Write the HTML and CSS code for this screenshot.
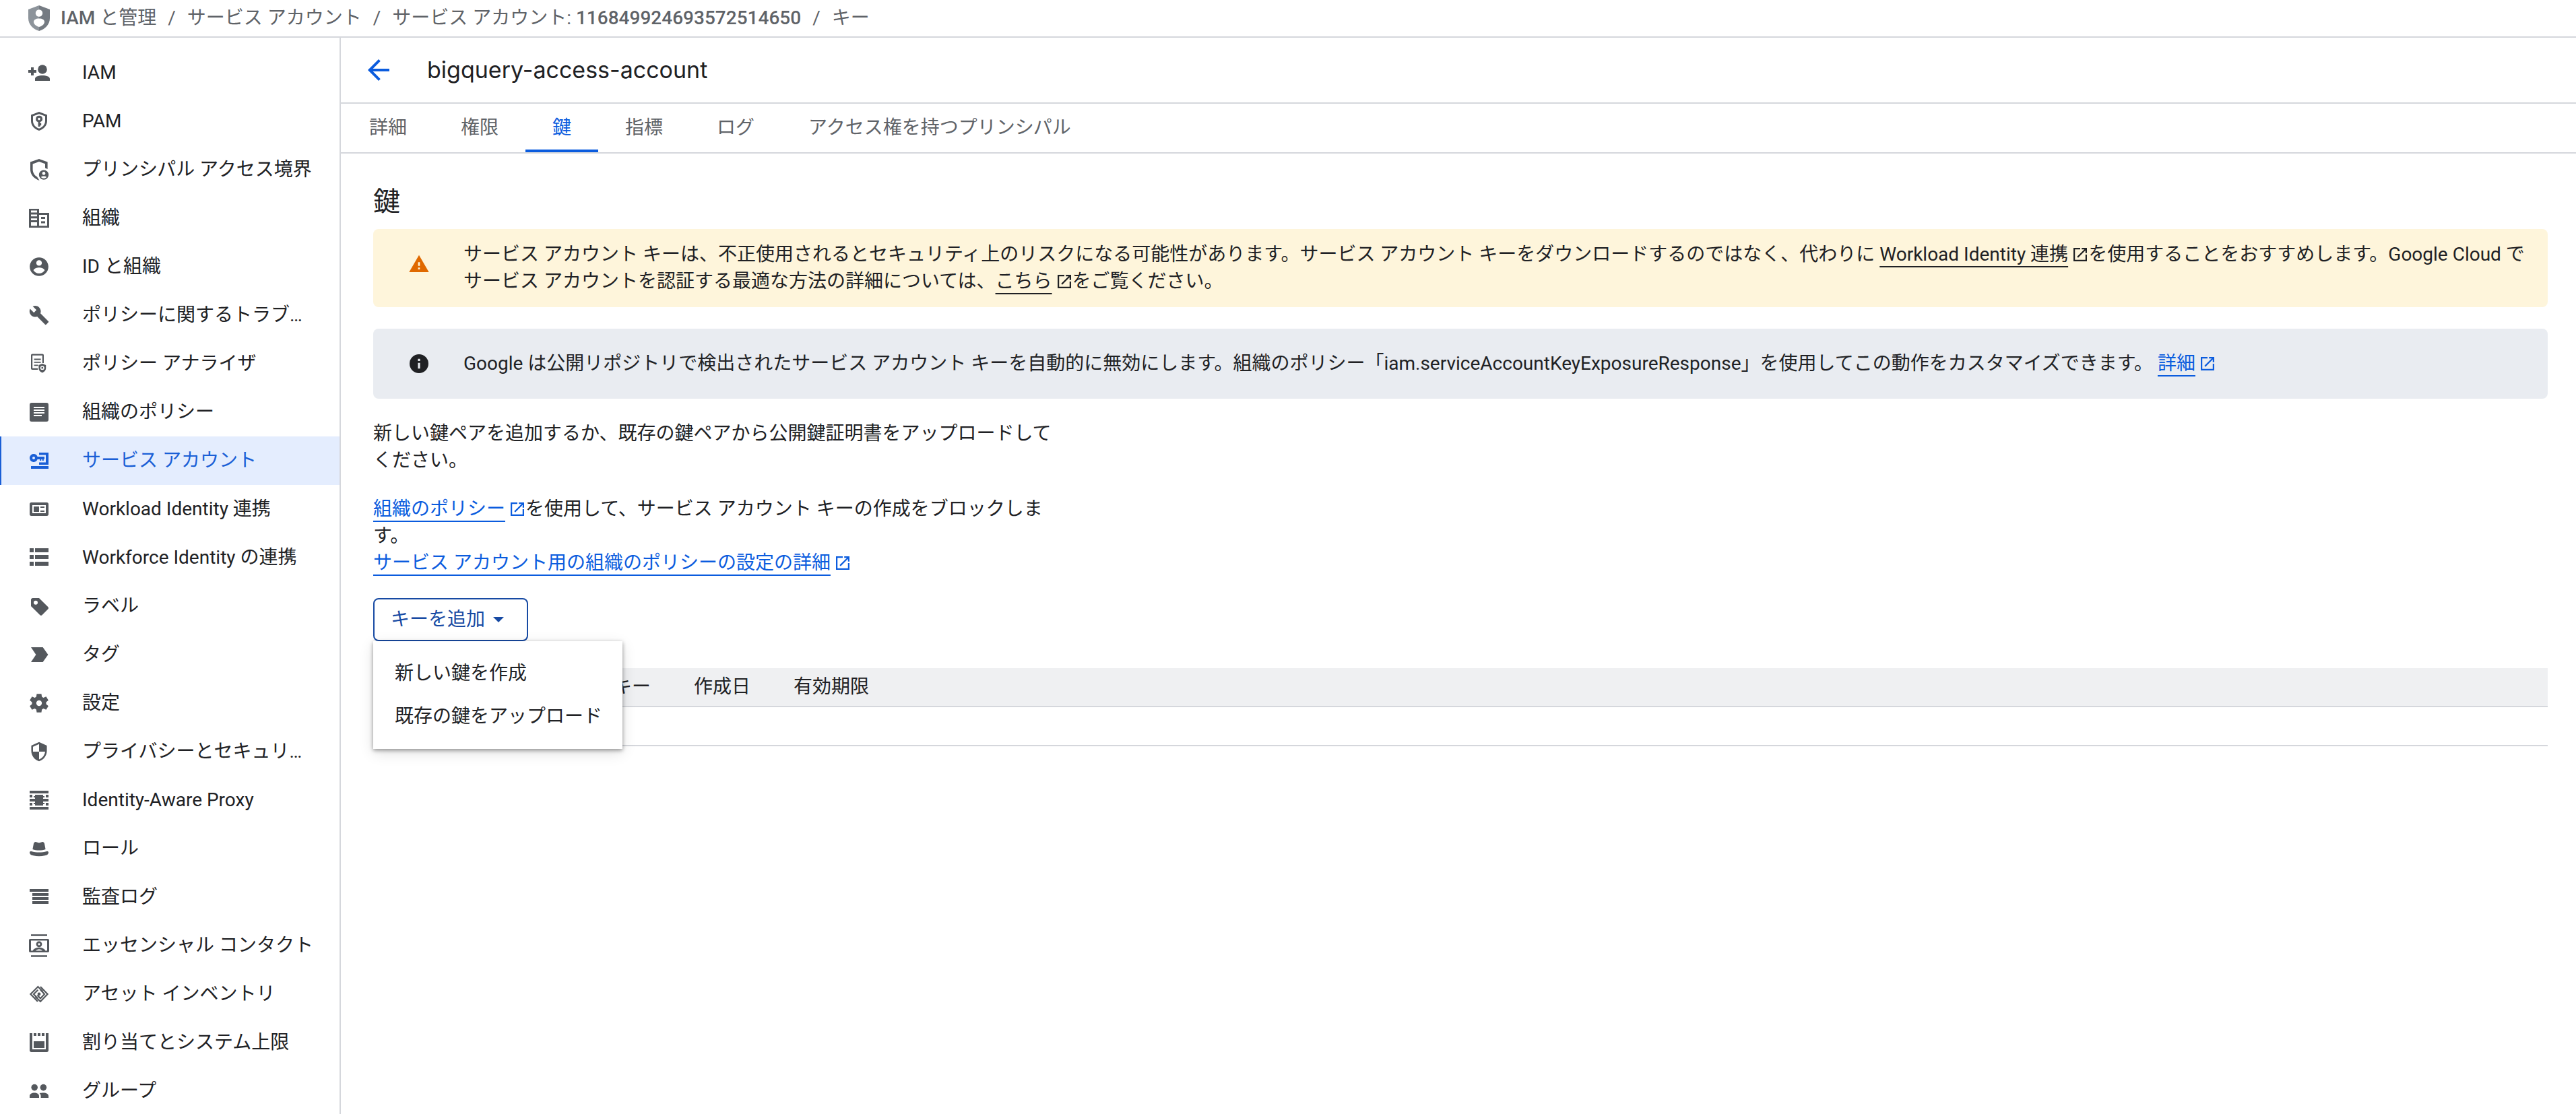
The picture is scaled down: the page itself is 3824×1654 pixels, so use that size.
FILE: index.html
```html
<!DOCTYPE html>
<html lang="ja">
<head>
  <meta charset="UTF-8">
  <meta name="viewport" content="width=device-width, initial-scale=1.0">
  <title>bigquery-access-account</title>
  <link rel="stylesheet" href="styles.css">
</head>
<body>
  <svg class="defs" aria-hidden="true">
    <symbol id="open" viewBox="3 3 18 18"><path d="M19 19H5V5h7V3H3v18h18v-9h-2v7zM14 3v2h3.600l-9.800 9.800 1.400 1.400L19 6.400V10h2V3h-7z"/></symbol>
  </svg>

  <header class="topbar">
    <svg class="logo" viewBox="0 0 32 38"><path fill="#8d949b" d="M16 0L0 6v13c0 9 7 16.500 16 19z"/><path fill="#757b82" d="M16 0l16 6v13c0 9-7 16.500-16 19z"/><circle cx="16" cy="11.500" r="5.200" fill="#fff"/><path fill="#fff" d="M16 19.500c5 0 8 2 8 5 0 3.500-4 6.500-8 7.500-4-1-8-4-8-7.500 0-3 3-5 8-5z"/></svg>
    <nav class="crumbs">
      <a href="#"><strong>IAM</strong> と管理</a><span class="sep">/</span>
      <a href="#">サービス アカウント</a><span class="sep">/</span>
      <a href="#">サービス アカウント: <strong>116849924693572514650</strong></a><span class="sep">/</span>
      <a href="#">キー</a>
    </nav>
  </header>

  <div class="layout">
    <nav class="sidebar">
      <a class="nav-item" href="#"><svg viewBox="0 0 18 18"><circle cx="11.500" cy="6.500" r="3.400"/><path d="M6 15v-1.500c0-1.800 3-2.500 5.500-2.500s5.500.7 5.500 2.500V15zM3 5h2v2h2v2H5v2H3V9H1V7h2z"/></svg><span>IAM</span></a>
      <a class="nav-item" href="#"><svg viewBox="0 0 18 18"><path fill-rule="evenodd" d="M9 2l6 2.200v4.600c0 3.400-2.500 6.200-6 7.200-3.500-1-6-3.800-6-7.200V4.200zM9 3.600L4.500 5.300v3.500c0 2.600 1.800 4.700 4.500 5.600 2.700-.9 4.500-3 4.500-5.600V5.300z"/><path fill-rule="evenodd" d="M9 4.900a2.400 2.400 0 0 1 .8 4.700v.9h.8v1.600h-.8v.9H8.300V9.600A2.400 2.400 0 0 1 9 4.900zm0 1.500a.9.900 0 1 0 0 1.800.9.900 0 0 0 0-1.800z"/></svg><span>PAM</span></a>
      <a class="nav-item" href="#"><svg viewBox="0 0 18 18"><path d="M9 1l6.300 2.300v5.200l-1.800-.7V4.600L9 3 4.300 4.700v4.100c0 2.300 1.200 4.300 3.200 5.500L9.300 17C5.300 15.800 2.500 12.600 2.500 8.800V3.300z"/><path fill-rule="evenodd" d="M12.500 9.200a3.600 3.600 0 1 1 0 7.200 3.600 3.600 0 0 1 0-7.200zm0 1.300a1.200 1.200 0 1 0 0 2.400 1.200 1.200 0 0 0 0-2.400zm0 3.200c-1.100 0-2 .4-2 .8.400.600 1.200.9 2 .9s1.600-.3 2-.9c0-.4-.9-.8-2-.8z"/></svg><span>プリンシパル アクセス境界</span></a>
      <a class="nav-item" href="#"><svg viewBox="0 0 18 18"><path fill-rule="evenodd" d="M1.500 2H9v3h7.500v11h-15zM3 3.300v1.400h4.500V3.300zM3 6.200v1.400h4.500V6.200zM3 9.100v1.400h4.500V9.100zM3 12v2.600h4.500V12zM9 6.500v8.100h6V6.500z"/><path d="M10.500 8h3v1.500h-3zM10.500 11.200h3v1.500h-3z"/></svg><span>組織</span></a>
      <a class="nav-item" href="#"><svg viewBox="-1 -1 26 26"><path d="M12 2C6.480 2 2 6.480 2 12s4.480 10 10 10 10-4.480 10-10S17.520 2 12 2zm0 3c1.660 0 3 1.340 3 3s-1.340 3-3 3-3-1.340-3-3 1.340-3 3-3zm0 14.200c-2.500 0-4.710-1.280-6-3.220.03-1.990 4-3.080 6-3.080 1.990 0 5.970 1.090 6 3.080-1.290 1.940-3.500 3.220-6 3.220z"/></svg><span>ID と組織</span></a>
      <a class="nav-item" href="#"><svg viewBox="-2 -2 28 28"><path d="M22.700 19l-9.100-9.100c.9-2.300.4-5-1.500-6.900-2-2-5-2.400-7.400-1.300L9 6 6 9 1.600 4.700C.4 7.100.9 10.100 2.900 12.100c1.900 1.900 4.600 2.400 6.900 1.500l9.100 9.100c.4.400 1 .4 1.400 0l2.300-2.300c.5-.4.5-1.100.1-1.400z"/></svg><span>ポリシーに関するトラブルシューティング</span></a>
      <a class="nav-item" href="#"><svg viewBox="0 0 18 18"><path d="M4 1.800h7.500c.600 0 1 .4 1 1v5.700h-1.100V2.900H4.100v9.500h4v1.100H4c-.600 0-1-.4-1-1V2.800c0-.600.4-1 1-1z"/><path d="M5.300 5.300h5v.9h-5zM5.300 7.500h5v.9h-5zM5.300 9.700h3v.9h-3z"/><path fill-rule="evenodd" d="M11.400 9l2.700 1v2.300c0 1.600-1.100 2.900-2.700 3.400-1.600-.5-2.700-1.800-2.700-3.400V10zm0 1.600a1.500 1.500 0 1 0 0 3 1.500 1.500 0 0 0 0-3z"/><circle cx="11.400" cy="12.100" r=".7"/></svg><span>ポリシー アナライザ</span></a>
      <a class="nav-item" href="#"><svg viewBox="0 0 18 18"><path fill-rule="evenodd" d="M3.500 2h11A1.500 1.500 0 0 1 16 3.500v11a1.500 1.500 0 0 1-1.500 1.500h-11A1.500 1.500 0 0 1 2 14.500v-11A1.500 1.500 0 0 1 3.500 2zM5 5v1h8V5zm0 2v1h8V7zm0 2v1h8V9zm0 2v1h6v-1z"/></svg><span>組織のポリシー</span></a>
      <a class="nav-item active" href="#"><svg viewBox="0 0 18 18"><path fill-rule="evenodd" d="M5 4a3 3 0 0 1 2.800 2H13v2h-.6v1h-1V8h-.8v1h-1V8H7.800A3 3 0 1 1 5 4zm0 2a1 1 0 1 0 0 2 1 1 0 0 0 0-2z"/><path d="M9 3h7v9H9v-1.700h5V4.700H9zM3 13h13v2H3z"/></svg><span>サービス アカウント</span></a>
      <a class="nav-item" href="#"><svg viewBox="0 0 18 18"><path fill-rule="evenodd" d="M3.200 4h11.600c.7 0 1.200.5 1.200 1.200v7.600c0 .7-.5 1.200-1.200 1.200H3.200c-.7 0-1.200-.5-1.200-1.200V5.200C2 4.500 2.500 4 3.200 4zM4 6v6h10V6z"/><path d="M5 7h4v4H5zM10 7h3v1h-3zM10 10h3v1h-3z"/></svg><span>Workload Identity 連携</span></a>
      <a class="nav-item" href="#"><svg viewBox="0 0 18 18"><path d="M2 2h3v3H2zM6 2h10v3H6zM2 7h3v3H2zM6 7h10v3H6zM2 12h3v3H2zM6 12h10v3H6z"/></svg><span>Workforce Identity の連携</span></a>
      <a class="nav-item" href="#"><svg viewBox="0 0 18 18"><path fill-rule="evenodd" d="M4.300 3H9l6.700 6.600c.4.400.4 1 0 1.500l-4.500 4.500c-.4.400-1.100.4-1.500 0L3 9V4.300C3 3.600 3.600 3 4.300 3zm2.200 1.900a1.500 1.500 0 1 0 0 3 1.500 1.500 0 0 0 0-3z"/></svg><span>ラベル</span></a>
      <a class="nav-item" href="#"><svg viewBox="0 0 18 18"><path d="M3 3.500h8.800L15.700 9l-3.900 5.500H3L6.700 9z"/></svg><span>タグ</span></a>
      <a class="nav-item" href="#"><svg viewBox="-1 -1 26 26"><path fill-rule="evenodd" d="M9.500 2h5l.5 3.200 1.600 1 3-1.300L22 9l-2.400 2v2L22 15l-2.400 4.100-3-1.300-1.600 1-.5 3.200h-5L9 18.800l-1.600-1-3 1.300L2 15l2.400-2v-2L2 9l2.400-4.100 3 1.300 1.600-1zM12 9a3 3 0 1 0 0 6 3 3 0 0 0 0-6z"/></svg><span>設定</span></a>
      <a class="nav-item" href="#"><svg viewBox="-2 -2 28 28"><path d="M12 1L3 5v6c0 5.550 3.840 10.740 9 12 5.160-1.260 9-6.450 9-12V5l-9-4zm0 10.990h7c-.53 4.120-3.280 7.790-7 8.940V12H5V6.300l7-3.110v8.800z"/></svg><span>プライバシーとセキュリティ</span></a>
      <a class="nav-item" href="#"><svg viewBox="0 0 18 18"><path d="M2 2h14v2H2zM2 14h14v2H2zM2 8h4V7h-1V6h1V5h6v1h1v1h-1v1h4v2h-4v1h1v1h-1v1H6v-1H5v-1h1v-1H2zM2 5h2v2H2zM14 5h2v2h-2zM2 11h2v2H2zM14 11h2v2h-2z"/></svg><span>Identity-Aware Proxy</span></a>
      <a class="nav-item" href="#"><svg viewBox="0 0 18 18"><path d="M4.200 9.500L5 5.300C5.300 4.200 6 3.800 6.900 4.100L9 4.700l2.100-.6c.9-.3 1.600.1 1.900 1.200l.8 4.200c-2.800 1-6.800 1-9.600 0zM2 11.800c0-.7.600-1 1.300-.8 3.700 1 7.700 1 11.400 0 .7-.2 1.300.1 1.300.8 0 .9-.4 1.600-1.300 1.900-3.700 1.200-7.700 1.200-11.400 0C2.400 13.400 2 12.700 2 11.800z"/></svg><span>ロール</span></a>
      <a class="nav-item" href="#"><svg viewBox="0 0 18 18"><path d="M2 3h14v2H2zM4 6h12v2H4zM4 9h12v2H4zM4 12h12v2H4z"/></svg><span>監査ログ</span></a>
      <a class="nav-item" href="#"><svg viewBox="0 0 18 18"><path d="M3 .6h12v1.300H3zM3 16.100h12v1.300H3z"/><path fill-rule="evenodd" d="M2.500 4h13c.600 0 1 .4 1 1v8c0 .600-.4 1-1 1h-13c-.600 0-1-.4-1-1V5c0-.600.4-1 1-1zM3 5.300v7.400h1.300c.8-1.500 2.700-2.300 4.700-2.300s3.900.8 4.700 2.300H15V5.300zM6.500 12.700h5c-.8-.600-1.600-.9-2.500-.9s-1.700.3-2.500.9z"/><path fill-rule="evenodd" d="M9 5.700a2.200 2.200 0 1 1 0 4.400 2.200 2.200 0 0 1 0-4.400zm0 1.400a.8.800 0 1 0 0 1.600.8.800 0 0 0 0-1.600z"/></svg><span>エッセンシャル コンタクト</span></a>
      <a class="nav-item" href="#"><svg viewBox="0 0 18 18"><g fill="none" stroke="currentColor" stroke-width="1.100"><path d="M8 14.500L2.700 9 8.200 3.500 11.800 7.100M10 3.500L15.300 9 10 14.500 6.200 10.800M8 12.300L5 9l3.200-3.100M10 5.700L13 9l-3 3.200-2.300-2.300"/></g><circle cx="9" cy="9" r="1.200"/></svg><span>アセット インベントリ</span></a>
      <a class="nav-item" href="#"><svg viewBox="0 0 18 18"><path d="M2 2h2v12h10V2h2v12.800c0 .7-.5 1.200-1.200 1.200H3.200c-.7 0-1.200-.5-1.200-1.200zM5 2h2v2H5zM8 2h2v2H8zM11 2h2v2h-2zM5 8h8v5H5z"/></svg><span>割り当てとシステム上限</span></a>
      <a class="nav-item" href="#"><svg viewBox="0 0 18 18"><circle cx="5.600" cy="6.300" r="2.400"/><circle cx="12.200" cy="6.300" r="2.400"/><path d="M2 14v-1.300C2 11 3.600 10.200 5.500 10.200S9 11 9 12.700V14zM10.300 14v-1.300c0-.9-.4-1.600-1-2.200.8-.2 1.700-.3 2.900-.3 2.200 0 3.800.8 3.800 2.500V14z"/></svg><span>グループ</span></a>
    </nav>

    <main class="main">
      <div class="page-header">
        <a class="back" href="#" aria-label="戻る"><svg viewBox="4 4 16 16"><path d="M20 11H7.830l5.590-5.590L12 4l-8 8 8 8 1.410-1.410L7.830 13H20v-2z"/></svg></a>
        <h1>bigquery-access-account</h1>
      </div>
      <nav class="tabs">
        <a href="#">詳細</a>
        <a href="#">権限</a>
        <a href="#" class="active">鍵</a>
        <a href="#">指標</a>
        <a href="#">ログ</a>
        <a href="#">アクセス権を持つプリンシパル</a>
      </nav>

      <div class="content">
        <h2>鍵</h2>
        <div class="notice warning">
          <svg viewBox="0 0 24 24"><path d="M1 21h22L12 2 1 21zm12-3h-2v-2h2v2zm0-4h-2v-4h2v4z"/></svg>
          <p>サービス アカウント キーは、不正使用されるとセキュリティ上のリスクになる可能性があります。サービス アカウント キーをダウンロードするのではなく、代わりに <a class="link dark" href="#"><span>Workload Identity 連携</span><svg><use href="#open"/></svg></a>を使用することをおすすめします。Google Cloud でサービス アカウントを認証する最適な方法の詳細については、<a class="link dark" href="#"><span>こちら</span><svg><use href="#open"/></svg></a>をご覧ください。</p>
        </div>
        <div class="notice info">
          <svg viewBox="0 0 24 24"><path d="M12 1.500a10.500 10.500 0 1 0 0 21 10.500 10.500 0 0 0 0-21zm1.200 16h-2.400V11h2.400zm0-8.500h-2.400V6.600h2.400z"/></svg>
          <p>Google は公開リポジトリで検出されたサービス アカウント キーを自動的に無効にします。組織のポリシー「iam.serviceAccountKeyExposureResponse」を使用してこの動作をカスタマイズできます。 <a class="link" href="#"><span>詳細</span><svg><use href="#open"/></svg></a></p>
        </div>

        <p class="text">新しい鍵ペアを追加するか、既存の鍵ペアから公開鍵証明書をアップロードしてください。</p>
        <p class="text"><a class="link" href="#"><span>組織のポリシー</span><svg><use href="#open"/></svg></a>を使用して、サービス アカウント キーの作成をブロックします。<br><a class="link" href="#"><span>サービス アカウント用の組織のポリシーの設定の詳細</span><svg><use href="#open"/></svg></a></p>

        <div class="dropdown">
          <button type="button" class="add-key">キーを追加<span class="caret"></span></button>
          <div class="menu">
            <button type="button">新しい鍵を作成</button>
            <button type="button">既存の鍵をアップロード</button>
          </div>
        </div>

        <table class="keys">
          <thead>
            <tr><th>種類</th><th>ステータス</th><th>キー</th><th>作成日</th><th>有効期限</th></tr>
          </thead>
          <tbody>
            <tr><td colspan="5"></td></tr>
          </tbody>
        </table>
      </div>
    </main>
  </div>
</body>
</html>
```
FILE: styles.css
```css
* {
  box-sizing: border-box;
}

body {
  margin: 0;
  min-height: 100vh;
  display: flex;
  flex-direction: column;
  background: #fff;
  color: #202124;
  font-family: Roboto, "Noto Sans CJK JP", sans-serif;
  font-size: 28px;
  line-height: 40px;
}

a {
  color: inherit;
  text-decoration: none;
}

h1,
h2,
p {
  margin: 0;
  font-weight: 400;
}

svg {
  fill: currentColor;
  flex-shrink: 0;
}

button {
  font: inherit;
  color: inherit;
  background: none;
  border: 0;
  text-align: left;
  white-space: nowrap;
  cursor: pointer;
}

.defs {
  display: none;
}

/* top bar */
.topbar {
  display: flex;
  align-items: center;
  gap: 16px;
  height: 56px;
  padding: 0 42px;
  border-bottom: 2px solid #d5d7dc;
  color: #5f6368;
}

.logo {
  width: 32px;
  height: 38px;
}

.crumbs {
  display: flex;
}

.crumbs strong {
  font-weight: 500;
}

.sep {
  margin: 0 17px;
}

.layout {
  display: flex;
  flex: 1;
}

/* sidebar */
.sidebar {
  width: 506px;
  flex-shrink: 0;
  padding-top: 16px;
  border-right: 2px solid #d5d7dc;
}

.nav-item {
  display: flex;
  align-items: center;
  gap: 46px;
  height: 72px;
  padding: 0 32px 0 40px;
}

.nav-item svg {
  width: 36px;
  height: 36px;
  color: #54585d;
}

.nav-item span {
  overflow: hidden;
  text-overflow: ellipsis;
  white-space: nowrap;
}

.nav-item.active {
  background: #e4edfe;
  box-shadow: inset 2px 0 #1a5fd6;
  color: #1a5fd6;
}

.nav-item.active svg {
  color: #1a5fd6;
}

/* main column */
.main {
  flex: 1;
  min-width: 0;
}

.page-header {
  display: flex;
  align-items: center;
  gap: 56px;
  height: 98px;
  padding: 0 40px;
  border-bottom: 2px solid #d5d7dc;
}

.back {
  display: flex;
  color: #0b5cde;
}

.back svg {
  width: 32px;
  height: 32px;
}

h1 {
  font-family: Inter, sans-serif;
  font-size: 34px;
}

.tabs {
  display: flex;
  height: 74px;
  padding-left: 2px;
  border-bottom: 2px solid #d5d7dc;
  color: #5f6368;
}

.tabs a {
  padding: 16px 40px 0;
}

.tabs .active {
  color: #0b5cde;
  border-bottom: 4px solid #0b5cde;
}

.content {
  padding: 44px 42px 0 48px;
}

h2 {
  margin-bottom: 12px;
  font-size: 40px;
  line-height: 56px;
}

.notice {
  display: flex;
  align-items: center;
  gap: 50px;
  margin-bottom: 32px;
  padding: 18px 32px 18px 52px;
  border-radius: 8px;
}

.notice > svg {
  width: 32px;
  height: 32px;
}

.warning {
  background: #fef5db;
}

.warning > svg {
  margin-bottom: 12px;
  color: #e06900;
}

.info {
  min-height: 104px;
  background: #e9ecf1;
}

.text {
  max-width: 1020px;
  margin-bottom: 32px;
}

.link {
  color: #0b5cde;
}

.link.dark {
  color: inherit;
}

.link span {
  text-decoration: underline;
  text-decoration-thickness: 2px;
  text-decoration-skip-ink: none;
  text-underline-offset: 8px;
}

.link svg {
  width: 20px;
  height: 20px;
  margin: 0 2px 0 8px;
  vertical-align: -1px;
}

/* key menu */
.dropdown {
  position: relative;
  width: fit-content;
  margin-bottom: 40px;
}

.add-key {
  display: flex;
  align-items: center;
  gap: 12px;
  height: 64px;
  padding: 0 34px 0 24px;
  border: 2px solid #174aa3;
  border-radius: 8px;
  color: #174aa3;
}

.caret {
  border: 8px solid transparent;
  border-top-color: currentColor;
  border-bottom: 0;
}

.menu {
  position: absolute;
  top: 100%;
  left: 0;
  display: flex;
  flex-direction: column;
  width: 370px;
  padding: 16px 0;
  background: #fff;
  box-shadow: 0 2px 6px rgba(0, 0, 0, 0.4), 0 6px 20px rgba(0, 0, 0, 0.12);
}

.menu button {
  height: 64px;
  padding: 0 32px;
}

/* keys table */
.keys {
  width: 100%;
  border-collapse: separate;
  border-spacing: 0;
}

.keys th {
  height: 58px;
  padding: 0 32px;
  background: #eff0f2;
  border-bottom: 2px solid #d5d7dc;
  font-weight: 400;
  text-align: left;
  white-space: nowrap;
}

.keys th:last-child {
  width: 100%;
}

.keys td {
  height: 58px;
  padding: 0;
  border-bottom: 2px solid #d5d7dc;
}
```
